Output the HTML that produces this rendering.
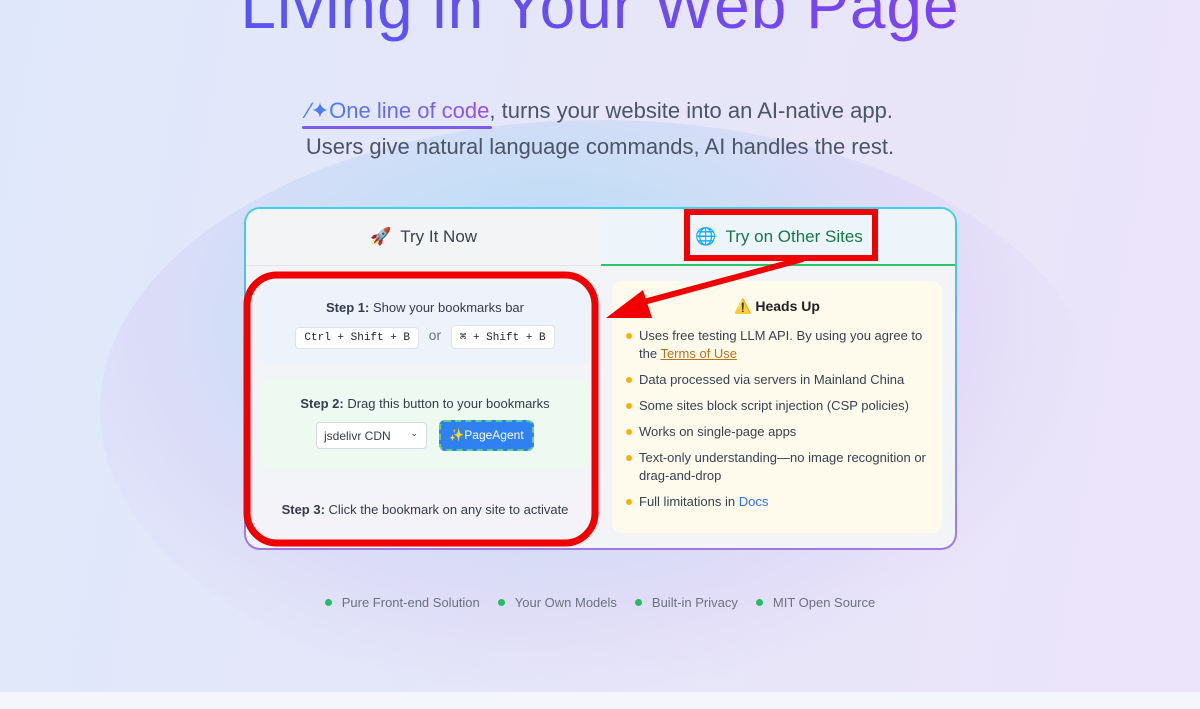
<!DOCTYPE html>
<html><head><meta charset="utf-8"><style>
*{box-sizing:border-box;margin:0;padding:0}
body{width:1200px;height:709px;overflow:hidden;font-family:"Liberation Sans",sans-serif;background:#f5f6fc;position:relative}
.bg{position:absolute;left:0;top:0;width:1200px;height:692px;background:linear-gradient(100deg,#dfe8fb 0%,#e6e6f8 50%,#ece4fa 100%)}
.glow{position:absolute;left:100px;top:120px;width:1000px;height:580px;border-radius:50%;background:radial-gradient(ellipse at 45% 35%,rgba(165,215,245,.85) 0%,rgba(180,215,245,.55) 30%,rgba(210,200,245,.35) 52%,rgba(230,225,250,0) 70%)}
h1{position:absolute;left:0;width:1200px;top:-31px;text-align:center;font-size:64px;font-weight:400;letter-spacing:1px;background:linear-gradient(90deg,#4a5cf2,#8a3cf0);-webkit-background-clip:text;color:transparent;white-space:nowrap}
.sub{position:absolute;left:0;width:1200px;text-align:center;font-size:22px;color:#4b5565}
.hl{position:relative;background:linear-gradient(90deg,#4a7cf2,#9a4ce8);-webkit-background-clip:text;color:transparent}
.ul{position:absolute;left:302px;top:126px;width:190px;height:3px;border-radius:2px;background:#7c5ae8}
.card{position:absolute;left:244px;top:207px;width:713px;height:343px;border-radius:16px;padding:2px;background:linear-gradient(180deg,#3fd0e8,#a07ae0)}
.in{width:100%;height:100%;border-radius:14px;background:#f3f4f7;position:relative;overflow:hidden}
.tab{position:absolute;top:0;height:57px;font-size:17px;display:flex;align-items:center;justify-content:center}
.t1{left:0;width:355px;background:#f3f4f6;color:#374151;border-bottom:1px solid #e3e5ea}
.t2{left:355px;width:356px;background:#eef5fa;color:#137a45;border-bottom:2px solid #2cc46a}
.box{position:absolute;border-radius:10px;text-align:center;font-size:13px;color:#333c4a}
kbd{display:inline-block;font-family:"Liberation Mono",monospace;font-size:11px;background:#fff;border:1px solid #dde2ee;border-radius:4px;padding:4px 8px;color:#222}
.warn{position:absolute;left:366px;top:72px;width:330px;height:252px;background:#fefbec;border-radius:10px;font-size:13px;color:#374151}
.warn ul{list-style:none;margin:0 0 0 27px}
.warn li{position:relative;line-height:18px;margin-bottom:8px}
.warn li:before{content:"";position:absolute;left:-13px;top:6px;width:6px;height:6px;border-radius:50%;background:#f2b20c}
.feat{position:absolute;top:595px;left:0;width:1200px;text-align:center;font-size:13px;color:#6b7280}
.feat span{margin:0 9px}
.feat i{display:inline-block;width:7px;height:7px;border-radius:50%;background:#1fbf62;margin-right:10px;vertical-align:1px}
</style></head><body>
<div class="bg"></div><div class="glow"></div>
<h1>Living in Your Web Page</h1>
<div class="sub" style="top:98px"><span style="color:#4a7cf2">⁄✦</span><span class="hl">One line of code</span>, turns your website into an AI-native app.</div>
<div class="ul"></div>
<div class="sub" style="top:134px">Users give natural language commands, AI handles the rest.</div>
<div class="card"><div class="in">
<div class="tab t1">🚀&nbsp; Try It Now</div>
<div class="tab t2">🌐&nbsp; Try on Other Sites</div>
<div class="box" style="left:14px;top:74px;width:330px;height:82px;background:#eef2fa;padding-top:17px"><b>Step 1:</b> Show your bookmarks bar<div style="margin-top:10px"><kbd>Ctrl + Shift + B</kbd> <span style="color:#6b7280;font-size:14px;margin:0 6px">or</span> <kbd>⌘ + Shift + B</kbd></div></div>
<div class="box" style="left:14px;top:170px;width:330px;height:90px;background:#eef9f2;padding-top:17px"><b>Step 2:</b> Drag this button to your bookmarks<div style="margin-top:11px;display:flex;justify-content:center;gap:12px"><div style="width:111px;height:27px;background:#fff;border:1px solid #d5d9e5;border-radius:4px;font-size:12px;text-align:left;padding:6px 7px;position:relative">jsdelivr CDN<span style="position:absolute;right:8px;top:5px;font-size:9px">⌄</span></div><div style="width:95px;height:31px;margin-top:-2px;background:#2f80f0;border:2px dashed #5ed08a;border-radius:6px;color:#fff;font-size:12px;padding-top:6px">✨PageAgent</div></div></div>
<div class="box" style="left:14px;top:277px;width:330px;height:48px;background:#f4f3fa;padding-top:16px"><b>Step 3:</b> Click the bookmark on any site to activate</div>
<div class="warn"><div style="text-align:center;font-weight:bold;font-size:14px;color:#222;margin:17px 0 12px">⚠️ Heads Up</div>
<ul><li>Uses free testing LLM API. By using you agree to the <u style="color:#b8731a">Terms of Use</u></li><li>Data processed via servers in Mainland China</li><li>Some sites block script injection (CSP policies)</li><li>Works on single-page apps</li><li>Text-only understanding—no image recognition or drag-and-drop</li><li>Full limitations in <span style="color:#2f6ff0">Docs</span></li></ul></div>
</div></div>
<svg style="position:absolute;left:0;top:0" width="1200" height="709">
<rect x="247" y="275" width="348" height="268" rx="30" fill="none" stroke="#f20000" stroke-width="7"/>
<rect x="687" y="212" width="188" height="46" fill="none" stroke="#f20000" stroke-width="6"/>
<line x1="803" y1="259" x2="640" y2="303" stroke="#f20000" stroke-width="6"/>
<polygon points="606,318 643,290 652,318" fill="#f20000"/>
</svg>
<div class="feat"><span><i></i>Pure Front-end Solution</span><span><i></i>Your Own Models</span><span><i></i>Built-in Privacy</span><span><i></i>MIT Open Source</span></div>
</body></html>
